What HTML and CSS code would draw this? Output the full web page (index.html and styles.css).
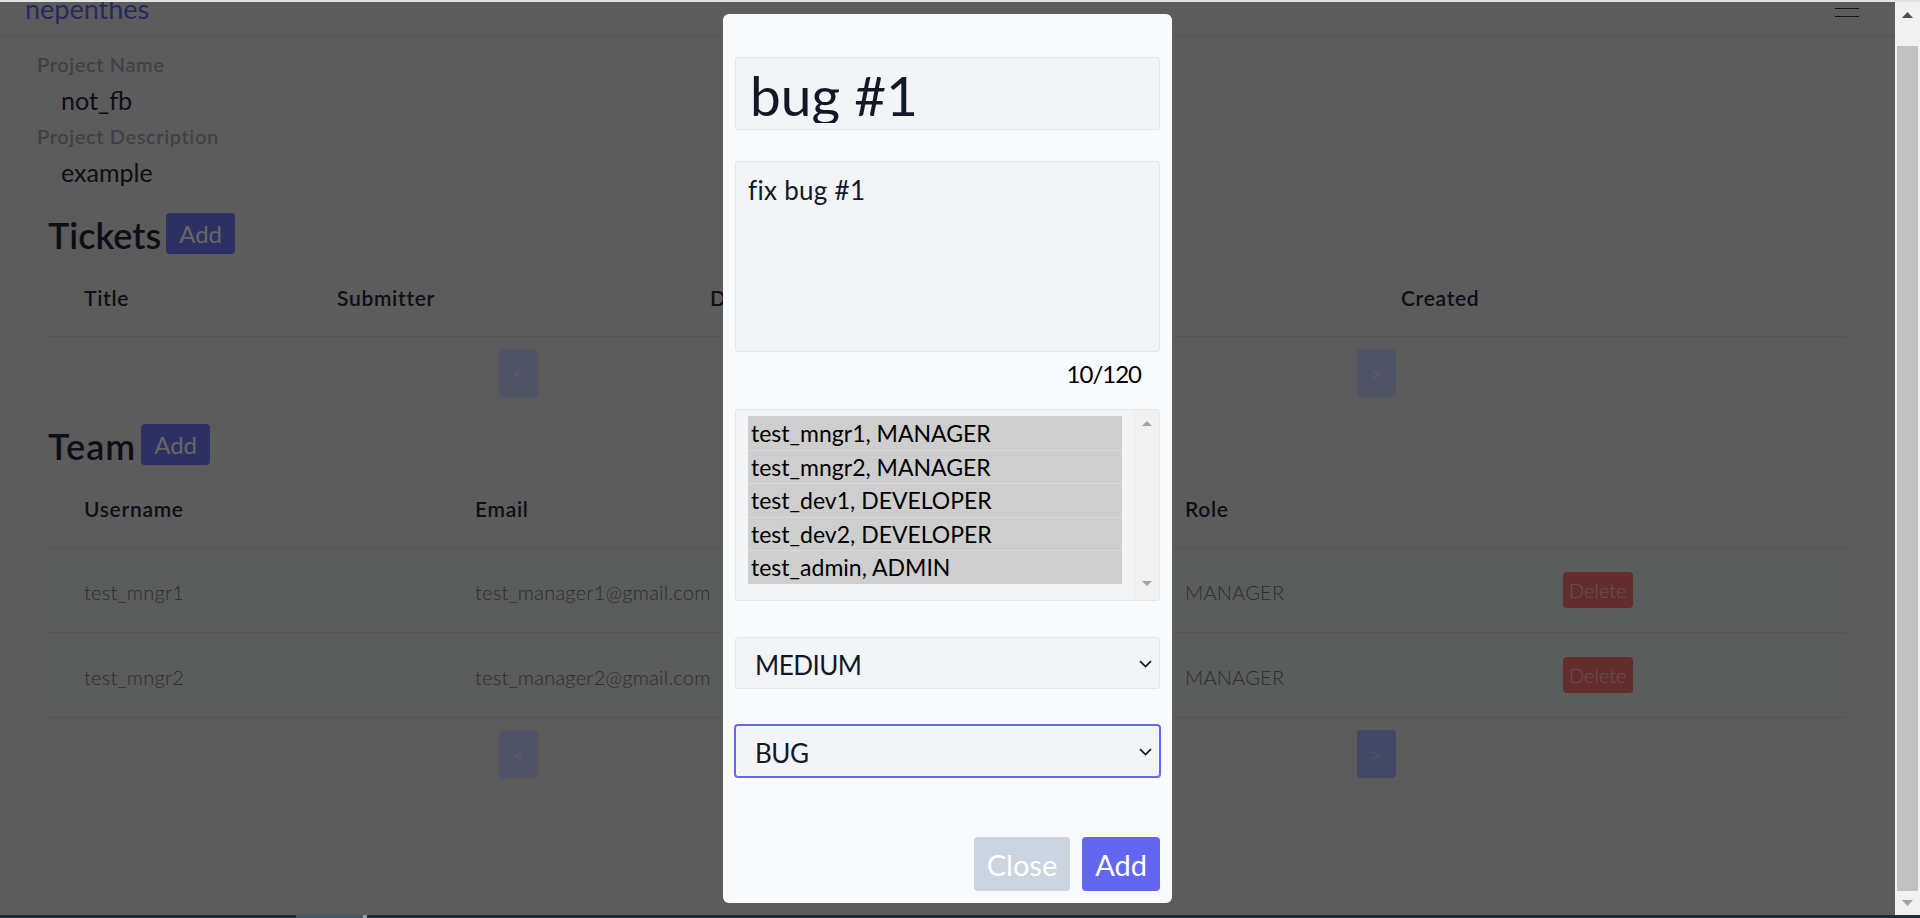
FILE: index.html
```html
<!DOCTYPE html>
<html lang="en">
<head>
<meta charset="utf-8">
<title>nepenthes - not_fb</title>
<link rel="stylesheet" href="styles.css">
</head>
<body>
<div class="page">
  <header class="navbar">
    <span class="brand">nepenthes</span>
    <div class="burger"><span></span><span></span><span></span></div>
  </header>
  <main class="content">
    <section class="project">
      <div class="label">Project Name</div>
      <div class="value">not_fb</div>
      <div class="label">Project Description</div>
      <div class="value">example</div>
    </section>

    <section class="block">
      <div class="block-head">
        <h2>Tickets</h2>
        <button class="btn-add">Add</button>
      </div>
      <div class="thead tickets-cols">
        <div class="th">Title</div>
        <div class="th">Submitter</div>
        <div class="th">Description</div>
        <div class="th">Priority</div>
        <div class="th">Created</div>
      </div>
      <div class="pager">
        <button class="pg pg-off">&lt;</button>
        <button class="pg pg-off">&gt;</button>
      </div>
    </section>

    <section class="block team">
      <div class="block-head">
        <h2>Team</h2>
        <button class="btn-add">Add</button>
      </div>
      <div class="thead team-cols">
        <div class="th">Username</div>
        <div class="th">Email</div>
        <div class="th">Role</div>
        <div class="th"></div>
      </div>
      <div class="row team-cols">
        <div class="td">test_mngr1</div>
        <div class="td">test_manager1@gmail.com</div>
        <div class="td">MANAGER</div>
        <div class="td"><button class="btn-del">Delete</button></div>
      </div>
      <div class="row team-cols">
        <div class="td">test_mngr2</div>
        <div class="td">test_manager2@gmail.com</div>
        <div class="td">MANAGER</div>
        <div class="td"><button class="btn-del">Delete</button></div>
      </div>
      <div class="pager">
        <button class="pg pg-off">&lt;</button>
        <button class="pg pg-on">&gt;</button>
      </div>
    </section>
  </main>
</div>

<div class="overlay">
  <div class="modal">
    <div class="title-box"><div class="title-clip">bug #1</div></div>
    <textarea class="desc">fix bug #1</textarea>
    <div class="counter">10/120</div>
    <div class="multi">
      <div class="opts">
        <div class="opt">test_mngr1, MANAGER</div>
        <div class="opt">test_mngr2, MANAGER</div>
        <div class="opt">test_dev1, DEVELOPER</div>
        <div class="opt">test_dev2, DEVELOPER</div>
        <div class="opt">test_admin, ADMIN</div>
      </div>
      <div class="mscroll">
        <svg width="10" height="5" viewBox="0 0 10 5"><path d="M0 5 L5 0 L10 5 Z" fill="#a3a3a3"/></svg>
        <svg width="10" height="5" viewBox="0 0 10 5"><path d="M0 0 L10 0 L5 5 Z" fill="#a3a3a3"/></svg>
      </div>
    </div>
    <div class="select">
      <span class="sel-text">MEDIUM</span>
      <svg class="chev" width="13" height="8" viewBox="0 0 13 8"><path d="M1 1.2 L6.5 6.6 L12 1.2" fill="none" stroke="#111827" stroke-width="1.8"/></svg>
    </div>
    <div class="select focus">
      <span class="sel-text">BUG</span>
      <svg class="chev" width="13" height="8" viewBox="0 0 13 8"><path d="M1 1.2 L6.5 6.6 L12 1.2" fill="none" stroke="#111827" stroke-width="1.8"/></svg>
    </div>
    <div class="actions">
      <button class="btn btn-close">Close</button>
      <button class="btn btn-primary">Add</button>
    </div>
  </div>
</div>

<div class="sbar">
  <div class="sb-up"><svg width="11" height="6" viewBox="0 0 11 6"><path d="M0 6 L5.5 0 L11 6 Z" fill="#505050"/></svg></div>
  <div class="sb-thumb"></div>
  <div class="sb-down"><svg width="11" height="6" viewBox="0 0 11 6"><path d="M0 0 L11 0 L5.5 6 Z" fill="#a3a3a3"/></svg></div>
</div>
<div class="band-top"></div>
<div class="taskbar"><span class="tb-seg"></span><span class="tb-tick"></span></div>
</body>
</html>
```

FILE: styles.css
```css
html, body {
  margin: 0;
  padding: 0;
  height: 100%;
  overflow: hidden;
}
body {
  background: #e6e6e6;
  font-family: Lato, "Noto Sans", sans-serif;
  color: #374151;
}
button {
  font-family: inherit;
  border: 0;
  margin: 0;
  cursor: pointer;
}

.page {
  width: 1895px;
}

/* navbar */
.navbar {
  height: 35px;
  border-bottom: 1px solid #d1d5db;
  display: flex;
  justify-content: space-between;
  align-items: flex-start;
  padding: 0 36px 0 25px;
}
.brand {
  font-size: 27px;
  line-height: 17px;
  color: #6366f1;
}
.burger {
  width: 24px;
  display: flex;
  flex-direction: column;
  gap: 7px;
}
.burger span {
  display: block;
  height: 1px;
  background: #333;
}

/* content */
.content {
  padding: 14px 49px 0 37px;
}
.label {
  font-size: 20px;
  line-height: 28px;
  font-weight: 600;
  letter-spacing: 0.6px;
  color: #9ca3af;
}
.value {
  font-size: 25px;
  line-height: 44px;
  padding-left: 24px;
  color: #1f2937;
}

.block {
  margin-left: 11px;
  margin-top: 17px;
}
.block.team {
  margin-top: 25px;
}
.block-head {
  display: flex;
  align-items: flex-start;
  gap: 5px;
}
.block-head h2 {
  margin: 0;
  font-size: 36px;
  line-height: 48px;
  font-weight: 600;
  color: #1f2937;
}
.team .block-head h2 {
  letter-spacing: 1px;
}
.btn-add {
  margin-top: 2px;
  height: 41px;
  padding: 0 13px;
  font-size: 24px;
  background: #7375f5;
  color: #fff;
  border-radius: 4px;
}

.thead {
  display: grid;
  border-bottom: 1px solid #d4d4d4;
}
.tickets-cols {
  grid-template-columns: 253px 373px 345px 346px 1fr;
}
.team-cols {
  grid-template-columns: 391px 710px 378px 1fr;
}
.th {
  padding: 25px 0 24px 36px;
  font-size: 21px;
  line-height: 28px;
  font-weight: 600;
  letter-spacing: 0.7px;
  color: #1f2937;
}
.row {
  display: grid;
  align-items: center;
  height: 84px;
  border-bottom: 1px solid #d4d4d4;
  background: #e3e6e6;
}
.td {
  padding: 4px 0 0 36px;
  font-size: 20px;
  line-height: 28px;
  font-weight: 300;
  letter-spacing: 0.25px;
  color: #6b7280;
}
.td:last-child {
  padding-top: 0;
}
.btn-del {
  height: 36px;
  padding: 0 6px;
  font-size: 20px;
  font-weight: 300;
  background: #f87171;
  color: #fecdd3;
  border-radius: 4px;
}

.pager {
  margin-top: 12px;
  display: flex;
  justify-content: center;
  gap: 819px;
}
.pg {
  width: 39px;
  height: 48px;
  font-size: 20px;
  color: #fff;
  border-radius: 4px;
}
.pg-off {
  background: #c7d2fe;
  color: #e0e7ff;
}
.pg-on {
  background: #a5b4fc;
  color: #c7d2fe;
}

/* overlay + modal */
.overlay {
  position: fixed;
  top: 0;
  left: 0;
  width: 1895px;
  height: 918px;
  background: rgba(0, 0, 0, 0.6);
  display: flex;
  justify-content: center;
  align-items: flex-start;
  padding-top: 14px;
  box-sizing: border-box;
}
.modal {
  width: 449px;
  height: 889px;
  box-sizing: border-box;
  padding: 12px;
  background: #f9fafb;
  border-radius: 6px;
  display: flex;
  flex-direction: column;
  color: #111827;
}
.title-box {
  margin-top: 31px;
  height: 73px;
  box-sizing: border-box;
  border: 1px solid #e5e7eb;
  background: #f3f4f6;
  border-radius: 3px;
  padding: 0 14px;
}
.title-clip {
  height: 65px;
  overflow: hidden;
  font-size: 55px;
  line-height: 75px;
  color: #111827;
  white-space: nowrap;
}
.desc {
  display: block;
  margin: 31px 0 0;
  height: 191px;
  box-sizing: border-box;
  padding: 12px;
  border: 1px solid #e5e7eb;
  background: #f3f4f6;
  border-radius: 3px;
  resize: none;
  outline: none;
  font-family: inherit;
  font-size: 26px;
  line-height: 32px;
  letter-spacing: 0.3px;
  color: #111827;
}
.counter {
  margin-top: 6px;
  text-align: right;
  padding-right: 19px;
  font-size: 24px;
  line-height: 32px;
  letter-spacing: -1px;
  color: #000;
}
.multi {
  margin-top: 19px;
  height: 192px;
  box-sizing: border-box;
  border: 1px solid #e5e7eb;
  background: #f3f4f6;
  border-radius: 3px;
  display: flex;
}
.opts {
  flex: 1;
  padding: 6px 12px;
}
.opt {
  height: 33.6px;
  line-height: 35px;
  padding-left: 3px;
  font-size: 23px;
  background: #cecece;
  color: #000;
  white-space: nowrap;
  overflow: hidden;
}
.opt + .opt {
  box-shadow: inset 0 1px 0 #dadada;
}
.mscroll {
  width: 25px;
  background: #f1f1f1;
  display: flex;
  flex-direction: column;
  justify-content: space-between;
  align-items: center;
  padding: 11px 0 14px;
  box-sizing: border-box;
}
.mscroll svg {
  display: block;
}
.select {
  margin-top: 36px;
  height: 52px;
  box-sizing: border-box;
  border: 1px solid #e5e7eb;
  background: #f3f4f6;
  border-radius: 3px;
  display: flex;
  align-items: center;
  justify-content: space-between;
  padding: 0 7px 0 19px;
  font-size: 26px;
  letter-spacing: -0.5px;
  color: #111827;
}
.select.focus {
  border-color: #6366f1;
  box-shadow: 0 0 0 1px #6366f1;
}
.sel-text {
  padding-top: 3px;
  line-height: 32px;
}
.chev {
  display: block;
  margin-top: 1px;
}
.actions {
  margin-top: auto;
  display: flex;
  justify-content: flex-end;
  gap: 12px;
}
.btn {
  height: 54px;
  padding: 0 13px;
  font-size: 29px;
  color: #fff;
  border-radius: 4px;
}
.btn-close {
  background: #cbd5e1;
}
.btn-primary {
  background: #6366f1;
}

/* window chrome */
.sbar {
  position: fixed;
  top: 2px;
  right: 0;
  width: 25px;
  height: 913px;
  background: #f1f1f1;
  display: flex;
  flex-direction: column;
}
.sb-up {
  height: 44px;
  box-sizing: border-box;
  padding-top: 10px;
  display: flex;
  justify-content: center;
  align-items: flex-start;
}
.sb-thumb {
  height: 845px;
  margin: 0 2px;
  background: #c1c1c1;
}
.sb-down {
  padding-top: 9px;
  display: flex;
  justify-content: center;
}
.sb-up svg, .sb-down svg {
  display: block;
}
.band-top {
  position: fixed;
  top: 0;
  left: 0;
  width: 100%;
  height: 2px;
  background: #e3e3e3;
}
.taskbar {
  position: fixed;
  left: 0;
  bottom: 0;
  width: 100%;
  height: 3px;
  background: #1d2f3a;
  display: flex;
}
.tb-seg {
  margin-left: 296px;
  width: 67px;
  background: #43586a;
}
.tb-tick {
  width: 4px;
  background: #8d9ca7;
}
```
